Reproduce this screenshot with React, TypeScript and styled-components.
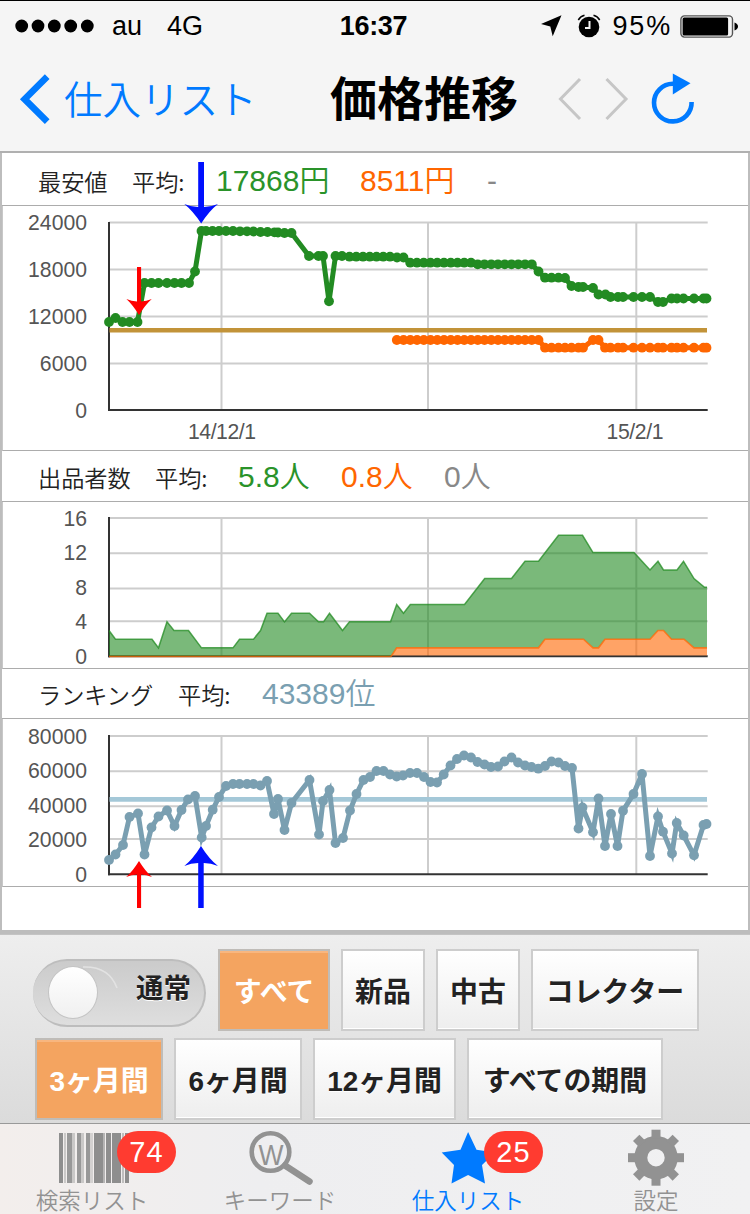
import React from 'react';
import styled, { createGlobalStyle } from 'styled-components';

const latin = '"Liberation Sans", "Noto Sans CJK JP", sans-serif';
const japanese = '"Noto Sans CJK JP", sans-serif';

const GlobalStyle = createGlobalStyle`
  * { box-sizing: border-box; }
  body { margin: 0; background: #f5f5f5; font-family: ${latin}; }
`;

const Screen = styled.div`
  position: relative;
  width: 750px;
  height: 1214px;
  display: flex;
  flex-direction: column;
  overflow: hidden;
  background: #f5f5f5;
`;

/* ---------- status bar and navigation ---------- */

const StatusBar = styled.header`
  height: 51px;
  border-top: 1px solid #000;
  display: grid;
  grid-template-columns: 1fr auto 1fr;
  align-items: center;
  padding: 0 12px 0 15px;
  font-size: 27px;
  line-height: 48px;
  color: #000;
`;

const StatusGroup = styled.div<{ $end?: boolean }>`
  display: flex;
  align-items: center;
  justify-content: ${p => (p.$end ? 'flex-end' : 'flex-start')};
`;

const Carrier = styled.span`
  margin-left: 18px;
`;

const Network = styled.span`
  margin-left: 25px;
`;

const Clock = styled.span`
  font-weight: 700;
  letter-spacing: -0.3px;
  margin-right: 6px;
`;

const StatusIcon = styled.svg<{ $gap?: number }>`
  flex: none;
  margin-left: ${p => p.$gap || 0}px;
`;

const Percent = styled.span`
  margin: 0 8px 0 12px;
  letter-spacing: 1.8px;
`;

const NavBar = styled.nav`
  height: 102px;
  border-bottom: 2px solid #b0b0b0;
  display: flex;
  align-items: center;
  padding: 0 0 4px 19px;
`;

const BackLabel = styled.span`
  margin-left: 14px;
  width: 266px;
  padding-bottom: 5px;
  font: 350 38.5px/60px ${japanese};
  color: #007aff;
  white-space: nowrap;
`;

const NavTitle = styled.h1`
  margin: 0;
  width: 228px;
  padding-bottom: 7px;
  font: 700 47px/60px ${japanese};
  color: #000;
  white-space: nowrap;
`;

const NavIcon = styled.svg<{ $gap?: number }>`
  display: block;
  flex: none;
  overflow: visible;
  margin-left: ${p => p.$gap || 0}px;
`;

/* ---------- charts ---------- */

const Panel = styled.main`
  height: 781px;
  flex: none;
  background: #fff;
  border: solid #bdbdbd;
  border-width: 0 2px 4px 2px;
`;

const MetricHeader = styled.div<{ $height: number; $drop?: number }>`
  height: ${p => p.$height}px;
  border-bottom: 1px solid #acacac;
  display: flex;
  align-items: center;
  padding-left: 36px;
  padding-top: ${p => p.$drop || 0}px;
  white-space: nowrap;
`;

const MetricLabel = styled.span<{ $width: number }>`
  width: ${p => p.$width}px;
  font: 350 23.2px/30px ${japanese};
  color: #222;
`;

const MetricValue = styled.span<{ $color: string; $width?: number }>`
  width: ${p => (p.$width ? `${p.$width}px` : 'auto')};
  font: 350 30px/40px ${latin};
  color: ${p => p.$color};
`;

const ChartBox = styled.div<{ $height: number }>`
  height: ${p => p.$height}px;
  border-bottom: 1px solid #acacac;
  border-left: 1px solid #c8c8c8;
`;

const ChartSvg = styled.svg`
  display: block;
  font-family: ${latin};
`;

type Point = [number, number];

const GREEN = '#228b22';
const ORANGE = '#ff6600';
const BLUE = '#7a9fb1';

const run = (from: number, to: number, count: number, y: number): Point[] =>
  Array.from({ length: count }, (_, i) => [from + ((to - from) * i) / (count - 1), y] as Point);

const lowestNew: Point[] = [
  [109, 322], [115.5, 318], [122.5, 322], [129.5, 322], [137.5, 322], [144.5, 283], [151.5, 283], [158.5, 283],
  [167, 283], [174.5, 283], [181.5, 283], [189, 283], [195, 271.5], [201.5, 231], [206, 231], [212.5, 231],
  [219, 231], [226, 231], [233, 231], [240, 231.3], [247, 231.3], [253.5, 231.5], [260.5, 232], [267.5, 232],
  [274.5, 232.3], [278, 232.5], [284.5, 233], [291.5, 233], [309, 256], [318.5, 256], [323, 256], [329, 301.3],
  [335.5, 256], [342, 256], ...run(349.5, 390, 7, 256.7), [397, 257.5], [403.5, 257.5],
  ...run(410.2, 471, 10, 262.7), ...run(477.7, 531.8, 9, 264.3), [538.5, 271.5], [545, 277.7], [551.5, 277.7],
  [558.5, 277.7], [565, 278], [571.5, 286], [578.5, 287], [583, 287], [593, 288], [598.5, 294.5], [605.5, 294.5],
  [610.5, 297], [618, 297], [623, 297], [633.5, 297], [642, 297], [650, 297], [658, 302], [663, 302],
  [671.5, 298.5], [677, 298.5], [683.5, 298.5], [694, 298.5], [703.5, 298.5], [706.5, 298.5],
];

const lowestUsed: Point[] = [
  ...run(396.8, 538.5, 22, 340), [545, 347.7], [551.5, 347.7], [558.5, 347.7], [565, 347.7], [571.5, 347.7],
  [578.5, 347.7], [583, 347.7], [593, 340], [598.5, 340], [605, 347.7], [610.5, 347.7], [618, 347.7],
  [623, 347.7], [633.5, 347.7], [642, 347.7], [650, 347.7], [658, 347.7], [663, 347.7], [671.5, 347.7],
  [677, 347.7], [683.5, 347.7], [694, 347.7], [703.5, 347.7], [706.5, 347.7],
];

const ranking: Point[] = [
  [109, 860], [115.5, 854.5], [123, 845], [129.5, 817], [138, 813.5], [144.5, 854.5], [151.5, 827.5],
  [158.5, 816.5], [167, 810.5], [174.5, 826], [181.5, 810], [188, 799.5], [195, 796], [201.7, 837.5], [206, 826],
  [212.7, 809.7], [219, 797], [226, 786], [233, 784], [239.5, 784], [247, 784], [253.5, 784], [260.5, 785.5],
  [267, 781], [274, 814], [278, 799], [284.5, 830], [291.5, 803], [309.5, 780], [319, 834.5], [323, 801],
  [329.5, 790], [335.5, 843], [343, 838], [350, 810.5], [356.5, 794], [363.5, 780], [370, 777], [376.5, 771],
  [383.5, 771], [390, 774.5], [396.7, 776.5], [403, 775.5], [410, 773], [417, 773], [424, 777], [430.5, 782],
  [437, 782.5], [443.7, 774.5], [450.5, 765.5], [457, 759], [464, 755.5], [471, 757.5], [477.5, 762],
  [484.5, 764.5], [491, 767], [498, 766.5], [504.5, 761.5], [511.5, 757.5], [518, 762.5], [525, 765.5],
  [531.5, 767], [538.3, 768.7], [545, 766], [551.5, 761.5], [558.5, 762.5], [565, 766], [572, 768],
  [578.5, 828.5], [582.5, 807.5], [593, 832.3], [598.5, 798.5], [605, 846], [611, 814], [617.5, 846],
  [623, 810.7], [633.5, 794], [642, 774], [650, 856], [658, 816.5], [663, 831.7], [672, 853.5], [676.7, 823],
  [683.7, 835.5], [694, 855.3], [703.5, 825], [706.5, 824],
];

const sellersNew: Point[] = [
  [109, 3], [115.5, 2], [152, 2], [158.5, 1], [167, 4], [174, 3], [188.5, 3], [201.5, 1], [233, 1], [239.5, 2],
  [253.5, 2], [260.5, 3], [267, 5], [278, 5], [284.5, 4], [291.5, 5], [309.5, 5], [318.5, 4], [323.5, 4],
  [329.5, 5], [342.5, 3], [349.5, 4], [390.5, 4], [396.7, 6], [403.5, 5], [410.3, 6], [464.5, 6], [484.7, 9],
  [511.5, 9], [525, 11], [538.5, 11], [558.5, 14], [582.5, 14], [593, 12], [634, 12], [650, 10], [658, 11],
  [663.5, 10], [677, 10], [683.5, 11], [694, 9], [704.5, 8], [707, 8],
];

const sellersUsed: Point[] = [
  [109, 0], [391, 0], [396.7, 1], [538.5, 1], [545, 2], [583.5, 2], [593, 1], [598.5, 1], [605, 2], [650, 2],
  [658, 3], [663.5, 3], [671.5, 2], [684, 2], [694, 1], [707, 1],
];

const toPath = (points: Point[]) => points.map(p => p.join(',')).join(' ');
const sellersToY = (points: Point[]): Point[] => points.map(([x, v]) => [x, 656.5 - v * 8.66]);

function Series({ points, color }: { points: Point[]; color: string }) {
  return (
    <g fill={color}>
      <polyline points={toPath(points)} fill="none" stroke={color} strokeWidth={5} strokeLinejoin="miter" />
      {points.map(([x, y], i) => (
        <circle key={i} cx={x} cy={y} r={4.9} />
      ))}
    </g>
  );
}

function Grid({ rows, top, base }: { rows: number[]; top: number; base: number }) {
  return (
    <g stroke="#cdcdcd" strokeWidth={2}>
      {rows.map(y => (
        <line key={y} x1={109} x2={707.7} y1={y} y2={y} />
      ))}
      {[221.5, 428, 636.3].map(x => (
        <line key={x} x1={x} x2={x} y1={top} y2={base} />
      ))}
    </g>
  );
}

function Axes({ top, base }: { top: number; base: number }) {
  return (
    <g stroke="#333" strokeWidth={2}>
      <line x1={109} x2={109} y1={top - 1} y2={base + 1} />
      <line x1={108} x2={707.7} y1={base} y2={base} />
    </g>
  );
}

function ScaleLabels({ labels }: { labels: [string, number][] }) {
  return (
    <g fill="#555" fontSize={21.2} textAnchor="end">
      {labels.map(([text, y]) => (
        <text key={text} x={87} y={y}>{text}</text>
      ))}
    </g>
  );
}

function PriceChart() {
  return (
    <ChartBox $height={245}>
      <ChartSvg width={745} height={244} viewBox="3 206 745 244">
        <Grid rows={[222.5, 269.5, 316.5, 363.5]} top={223} base={410} />
        <Axes top={223} base={410} />
        <ScaleLabels labels={[['24000', 230], ['18000', 277], ['12000', 324], ['6000', 371], ['0', 417.7]]} />
        <g fill="#555" fontSize={21.2} textAnchor="middle">
          <text x={222} y={438.7} textLength={68}>14/12/1</text>
          <text x={635} y={438.7} textLength={57}>15/2/1</text>
        </g>
        <line x1={109.5} x2={707} y1={330.2} y2={330.2} stroke="#c29339" strokeWidth={4.6} />
        <Series points={lowestNew} color={GREEN} />
        <Series points={lowestUsed} color={ORANGE} />
      </ChartSvg>
    </ChartBox>
  );
}

function SellersChart() {
  const upper = sellersToY(sellersNew);
  const lower = sellersToY(sellersUsed);
  return (
    <ChartBox $height={167}>
      <ChartSvg width={745} height={166} viewBox="3 502 745 166">
        <Grid rows={[518, 553.3, 588.5, 621.3]} top={518} base={656} />
        <Axes top={518} base={656.3} />
        <ScaleLabels labels={[['16', 525.5], ['12', 560.3], ['8', 595], ['4', 629.3], ['0', 664]]} />
        <polygon points={toPath([...upper, ...[...lower].reverse()])} fill={GREEN} fillOpacity={0.6} />
        <polygon points={toPath([...lower.slice(1), [707, 655.4], [391, 655.4]])} fill={ORANGE} fillOpacity={0.6} />
        <polyline points={toPath(upper)} fill="none" stroke={GREEN} strokeOpacity={0.75} strokeWidth={1.5} />
        <polyline points={toPath(lower)} fill="none" stroke={ORANGE} strokeOpacity={0.75} strokeWidth={1.6} />
      </ChartSvg>
    </ChartBox>
  );
}

function RankingChart() {
  return (
    <ChartBox $height={168}>
      <ChartSvg width={745} height={167} viewBox="3 719 745 167">
        <Grid rows={[736, 771.3, 806.3, 839]} top={736} base={874} />
        <Axes top={736} base={874.3} />
        <ScaleLabels labels={[['80000', 743.7], ['60000', 778], ['40000', 813], ['20000', 847.3], ['0', 882]]} />
        <line x1={109.5} x2={707} y1={799.4} y2={799.4} stroke="#a4c8d8" strokeWidth={4.8} />
        <Series points={ranking} color={BLUE} />
      </ChartSvg>
    </ChartBox>
  );
}

const Marks = styled.svg`
  position: absolute;
  left: 0;
  top: 0;
  pointer-events: none;
`;

function ArrowMarks() {
  return (
    <Marks width={750} height={930} viewBox="0 0 750 930">
      <g fill="#0010ff">
        <path d="M198.2 162H204V207Q211 207 218 204Q209 211 201.2 223.5Q193 211 184.3 204Q191 207 198.2 207Z" />
        <path d="M198.2 908V863Q191 863 184.3 866Q193 859 201 846Q209 859 218 866Q211 863 203.7 863V908Z" />
      </g>
      <g fill="#f00">
        <path d="M137 267H141.1V301.5Q146.5 301.3 151.8 299Q145.5 304.5 139 315Q132.5 304.5 126.4 299Q131.5 301.3 137 301.5Z" />
        <path d="M137 908V874.5Q131.5 874.7 126.2 877Q132.5 871.5 139 861Q145.5 871.5 152 877Q146.5 874.7 141.1 874.5V908Z" />
      </g>
    </Marks>
  );
}

/* ---------- filter controls ---------- */

const Controls = styled.section`
  flex: none;
  height: 189px;
  background: linear-gradient(#eeeeee, #dbdbdb);
  border-top: 1px solid #c4c4c4;
  padding: 14px 0 0 33px;
  display: flex;
  flex-direction: column;
  gap: 7px;
`;

const ControlRow = styled.div<{ $indent?: number }>`
  display: flex;
  align-items: center;
  height: 82px;
  gap: 11px;
  padding-left: ${p => p.$indent || 0}px;
`;

const Toggle = styled.div`
  position: relative;
  width: 173px;
  height: 68px;
  margin: 5px 1px 0 0;
  border: solid #bdbdbd;
  border-width: 2px 2px 2px 0;
  border-radius: 34px;
  background: linear-gradient(#cbcbcb, #dedede);
  padding: 5px 13px 0 15px;
  display: flex;
  justify-content: space-between;
  overflow: hidden;
`;

const Knob = styled.span`
  width: 50px;
  height: 53px;
  border: 1.5px solid #c4c4c4;
  border-radius: 50%;
  background: linear-gradient(#fff, #f0f0f0);
`;

const ToggleShine = styled.svg`
  position: absolute;
  left: 0;
  top: 0;
`;

const ToggleLabel = styled.span`
  font: 700 27.5px/41px ${japanese};
  color: #222;
  text-shadow: 0 1px 0 #fff;
`;

const FilterButton = styled.button<{ $width: number; $active?: boolean }>`
  flex: none;
  width: ${p => p.$width}px;
  height: 82px;
  margin: 0;
  padding: 6px 0 0;
  border: 2px solid ${p => (p.$active ? '#bfbcb8' : '#cdcdcd')};
  border-radius: 0;
  background: ${p => (p.$active ? '#f4a460' : 'linear-gradient(#fff, #eeeeee)')};
  box-shadow: ${p => (p.$active ? 'inset 0 2px 0 #f8b67f' : 'inset 0 -1px 0 #fff')};
  font: 700 27.9px/40px "Liberation Sans", ${japanese};
  color: ${p => (p.$active ? '#fff' : '#222')};
  text-shadow: ${p => (p.$active ? 'none' : '0 1px 0 #fff')};
  white-space: nowrap;
`;

/* ---------- tab bar ---------- */

const TabBar = styled.footer`
  flex: none;
  height: 91px;
  border-top: 1px solid #999;
  background: linear-gradient(90deg, #f3eeec, #eeeef0 35%, #f1f1f2);
  display: grid;
  grid-template-columns: repeat(4, 188px);
  margin-left: -2px;
`;

const Tab = styled.div<{ $active?: boolean }>`
  position: relative;
  display: flex;
  flex-direction: column;
  align-items: center;
  padding-top: 4px;
  color: ${p => (p.$active ? '#007aff' : '#929292')};
`;

const TabIcon = styled.svg`
  display: block;
  flex: none;
  overflow: visible;
`;

const TabLabel = styled.span`
  margin-top: 3px;
  font: 350 22.5px/25px ${japanese};
  white-space: nowrap;
`;

const Badge = styled.span<{ $left: number }>`
  position: absolute;
  left: ${p => p.$left}px;
  top: 7px;
  width: 59px;
  height: 42px;
  border-radius: 21px;
  background: #ff3b30;
  color: #fff;
  font: 400 29px/43px ${latin};
  letter-spacing: 1px;
  text-align: center;
`;

const bars: [number, number, number][] = [
  [0, 4, 1], [5, 2, 0.4], [8, 5, 0.9], [13, 3, 0.4], [18, 4, 0.9], [22, 3, 0.4], [27, 4, 0.9], [31, 3, 0.3],
  [35, 9, 1], [44, 2, 0.6], [47, 5, 1], [53, 9, 1], [63, 2, 0.5], [66, 4, 1],
];

const teeth = [0, 45, 90, 135, 180, 225, 270, 315];

export default function App() {
  return (
    <>
      <GlobalStyle />
      <Screen>
        <StatusBar>
          <StatusGroup>
            <StatusIcon width={79} height={14} viewBox="0 0 79 14">
              {[6.7, 23, 39.3, 55.7, 72.3].map(x => (
                <circle key={x} cx={x} cy={7} r={6.4} />
              ))}
            </StatusIcon>
            <Carrier>au</Carrier>
            <Network>4G</Network>
          </StatusGroup>
          <Clock>16:37</Clock>
          <StatusGroup $end>
            <StatusIcon width={21} height={22} viewBox="0 0 21 22">
              <path d="M0 9L20.5 0.3L11.7 21.2L9.3 11.5Z" />
            </StatusIcon>
            <StatusIcon width={24} height={24} viewBox="0 0 24 24" $gap={15}>
              <circle cx={12} cy={13} r={10.3} />
              <path d="M1.3 6Q3.5 2.3 7.5 1.3M22.7 6Q20.5 2.3 16.5 1.3" fill="none" stroke="#000" strokeWidth={1.5} />
              <path d="M12.5 7V14H8" fill="none" stroke="#f5f5f5" strokeWidth={2} />
            </StatusIcon>
            <Percent>95%</Percent>
            <StatusIcon width={58} height={23} viewBox="0 0 58 23">
              <rect x={0.9} y={0.9} width={51.6} height={21.2} rx={3.5} fill="none" stroke="#555" strokeWidth={1.4} />
              <rect x={2.6} y={2.6} width={45.5} height={17.8} rx={1.5} />
              <path d="M54.5 7.5Q58 9 58 11.5T54.5 15.5Z" />
            </StatusIcon>
          </StatusGroup>
        </StatusBar>

        <NavBar>
          <NavIcon width={31} height={50} viewBox="0 0 31 50">
            <path d="M28.2 2.7L5.6 25.2L28.2 47.7" fill="none" stroke="#007aff" strokeWidth={6.6} />
          </NavIcon>
          <BackLabel>仕入リスト</BackLabel>
          <NavTitle>価格推移</NavTitle>
          <NavIcon width={70} height={44} viewBox="558 77 70 44">
            <path d="M580 79L560.5 99L580 119M606.5 79L626 99L606.5 119" fill="none" stroke="#c6c6c6" strokeWidth={3} />
          </NavIcon>
          <NavIcon width={44} height={52} viewBox="651 73.5 44 52" $gap={23}>
            <path d="M673 84.3A18.8 18.8 0 1 0 691.6 102.5" fill="none" stroke="#007aff" strokeWidth={4.6} />
            <path d="M672.8 74L690.5 83.8L672.8 95Z" fill="#007aff" />
          </NavIcon>
        </NavBar>

        <Panel>
          <MetricHeader $height={53} $drop={3}>
            <MetricLabel $width={94}>最安値</MetricLabel>
            <MetricLabel $width={84}>平均:</MetricLabel>
            <MetricValue $color="#2a932a" $width={144}>17868円</MetricValue>
            <MetricValue $color={ORANGE} $width={127}>8511円</MetricValue>
            <MetricValue $color="#888">-</MetricValue>
          </MetricHeader>
          <PriceChart />
          <MetricHeader $height={51} $drop={1}>
            <MetricLabel $width={117}>出品者数</MetricLabel>
            <MetricLabel $width={83}>平均:</MetricLabel>
            <MetricValue $color="#2a932a" $width={103}>5.8人</MetricValue>
            <MetricValue $color={ORANGE} $width={103}>0.8人</MetricValue>
            <MetricValue $color="#888">0人</MetricValue>
          </MetricHeader>
          <SellersChart />
          <MetricHeader $height={50} $drop={1}>
            <MetricLabel $width={140}>ランキング</MetricLabel>
            <MetricLabel $width={84}>平均:</MetricLabel>
            <MetricValue $color={BLUE}>43389位</MetricValue>
          </MetricHeader>
          <RankingChart />
        </Panel>

        <Controls>
          <ControlRow>
            <Toggle>
              <ToggleShine width={173} height={64} viewBox="0 0 173 64">
                <path d="M50 6Q76 5 84 27" fill="none" stroke="#e2e2e2" strokeWidth={1.6} />
              </ToggleShine>
              <Knob />
              <ToggleLabel>通常</ToggleLabel>
            </Toggle>
            <FilterButton $width={112} $active>すべて</FilterButton>
            <FilterButton $width={84}>新品</FilterButton>
            <FilterButton $width={84}>中古</FilterButton>
            <FilterButton $width={168}>コレクター</FilterButton>
          </ControlRow>
          <ControlRow $indent={2}>
            <FilterButton $width={128} $active>3ヶ月間</FilterButton>
            <FilterButton $width={128}>6ヶ月間</FilterButton>
            <FilterButton $width={143}>12ヶ月間</FilterButton>
            <FilterButton $width={196}>すべての期間</FilterButton>
          </ControlRow>
        </Controls>

        <TabBar>
          <Tab>
            <TabIcon width={68} height={56} viewBox="-1 -5 68 56">
              {bars.map(([x, w, o]) => (
                <rect key={x} x={x} y={0} width={w} height={50} fill="#8e8e8e" fillOpacity={o} />
              ))}
            </TabIcon>
            <TabLabel>検索リスト</TabLabel>
            <Badge $left={119}>74</Badge>
          </Tab>
          <Tab>
            <TabIcon width={64} height={56} viewBox="248.5 1128 64 56">
              <circle cx={271} cy={1152} r={18.8} fill="none" stroke="#929292" strokeWidth={4.6} />
              <path d="M285.5 1165.5L310 1181.5" stroke="#929292" strokeWidth={6.5} strokeLinecap="round" />
              <text x={259} y={1164.5} fontSize={29} fill="#929292" textLength={25} lengthAdjust="spacingAndGlyphs" fontFamily="Liberation Sans">W</text>
            </TabIcon>
            <TabLabel>キーワード</TabLabel>
          </Tab>
          <Tab $active>
            <TabIcon width={54} height={56} viewBox="441.5 1128 54 56">
              <path d="M468.6 1132L477 1149.8L495.5 1152.5L482.5 1165L485.5 1183.5L468.6 1175L452 1183.5L454.5 1165L442.2 1152.5L461 1149.8Z" fill="#007aff" />
            </TabIcon>
            <TabLabel>仕入リスト</TabLabel>
            <Badge $left={110}>25</Badge>
          </Tab>
          <Tab>
            <TabIcon width={56} height={56} viewBox="-28 -29.7 56 56">
              <circle r={15.2} fill="none" stroke="#929292" strokeWidth={13} />
              {teeth.map(a => (
                <rect key={a} x={-4.5} y={-28} width={9} height={9} fill="#929292" transform={`rotate(${a})`} />
              ))}
            </TabIcon>
            <TabLabel>設定</TabLabel>
          </Tab>
        </TabBar>
        <ArrowMarks />
      </Screen>
    </>
  );
}
